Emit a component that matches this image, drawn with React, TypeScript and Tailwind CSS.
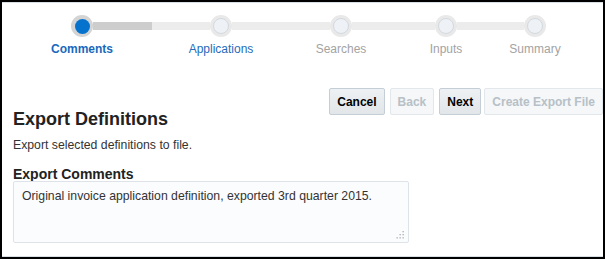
import React from "react";

type Step = { label: string; state: "active" | "todo" | "visited" };

const steps: Step[] = [
  { label: "Comments", state: "active" },
  { label: "Applications", state: "visited" },
  { label: "Searches", state: "todo" },
  { label: "Inputs", state: "todo" },
  { label: "Summary", state: "todo" },
];

function Circle({ active }: { active: boolean }) {
  if (active) {
    return (
      <div className="w-[22px] h-[22px] rounded-full bg-[#d4d4d4] flex items-center justify-center">
        <div className="w-[15px] h-[15px] rounded-full bg-[#0572ce]" />
      </div>
    );
  }
  return (
    <div className="w-[22px] h-[22px] rounded-full bg-[#e9e9e9] flex items-center justify-center">
      <div className="w-[16px] h-[16px] rounded-full bg-[#eef2f6] border border-[#d3d9de]" />
    </div>
  );
}

function StepNode({ step }: { step: Step }) {
  const labelClass =
    step.state === "active"
      ? "font-bold text-[#1769bd]"
      : step.state === "visited"
      ? "text-[#1f6cbb]"
      : "text-[#a3a3a3]";
  return (
    <div className="flex flex-col items-center w-[22px] shrink-0">
      <Circle active={step.state === "active"} />
      <div className={`mt-[5px] text-[12px] leading-[14px] whitespace-nowrap ${labelClass}`}>
        {step.label}
      </div>
    </div>
  );
}

function Btn({ children, disabled }: { children: React.ReactNode; disabled?: boolean }) {
  return (
    <div
      className={
        disabled
          ? "h-[27px] px-[7px] flex items-center border border-[#e2e7eb] bg-[#f5f7f8] text-[#b7c0c7] text-[12px] font-bold rounded-[2px]"
          : "h-[27px] px-[7px] flex items-center border border-[#c5ced6] bg-gradient-to-b from-[#eef1f3] to-[#e2e6e9] text-[#000] text-[12px] font-bold rounded-[2px]"
      }
    >
      {children}
    </div>
  );
}

export default function App() {
  return (
    <div
      className="w-[605px] h-[259px] border-2 border-black bg-white text-[#333]"
      style={{ fontFamily: '"Liberation Sans", Arial, sans-serif' }}
    >
      <div className="h-full border-y border-[#d9e0e5] flex flex-col">
        {/* step train */}
        <div className="pt-[12px] pl-[69px] flex items-start">
          <StepNode step={steps[0]} />
          <div className="mt-[7px] h-[8px] w-[117px] flex shrink-0">
            <div className="w-[59px] h-full bg-[#cdcdcd]" />
            <div className="flex-1 h-full bg-[#ececec]" />
          </div>
          <StepNode step={steps[1]} />
          <div className="mt-[7px] h-[8px] w-[98px] bg-[#ececec] shrink-0" />
          <StepNode step={steps[2]} />
          <div className="mt-[7px] h-[8px] w-[83px] bg-[#ececec] shrink-0" />
          <StepNode step={steps[3]} />
          <div className="mt-[7px] h-[8px] w-[67px] bg-[#ececec] shrink-0" />
          <StepNode step={steps[4]} />
        </div>

        {/* header row */}
        <div className="mt-[32px] pl-[11px] pr-0 flex items-start justify-between">
          <h1 className="mt-[20px] text-[18px] leading-[22px] font-bold text-[#222]">
            Export Definitions
          </h1>
          <div className="flex items-center">
            <Btn>Cancel</Btn>
            <div className="ml-[5px]">
              <Btn disabled>Back</Btn>
            </div>
            <div className="ml-[5px]">
              <Btn>Next</Btn>
            </div>
            <div className="ml-[3px]">
              <Btn disabled>Create Export File</Btn>
            </div>
          </div>
        </div>

        <div className="pl-[11px]">
          <p className="mt-[7px] text-[12.25px] leading-[16px] text-[#333]">
            Export selected definitions to file.
          </p>
          <div className="mt-[14px] text-[14px] leading-[14px] font-bold text-[#222]">
            Export Comments
          </div>
          <div className="relative w-[396px] h-[62px] border border-[#dde3e8] bg-[#fbfcfe] rounded-[2px] pt-[7px] px-[8px] text-[12.25px] leading-[14px] text-[#333]">
            Original invoice application definition, exported 3rd quarter 2015.
            <svg
              className="absolute right-[3px] bottom-[2px]"
              width="10"
              height="10"
              viewBox="0 0 10 10"
            >
              <rect x="7.5" y="1" width="1.3" height="1.3" fill="#a9adb1" />
              <rect x="4.5" y="4" width="1.3" height="1.3" fill="#a9adb1" />
              <rect x="7.5" y="4" width="1.3" height="1.3" fill="#a9adb1" />
              <rect x="1.5" y="7.2" width="1.3" height="1.3" fill="#a9adb1" />
              <rect x="4.5" y="7.2" width="1.3" height="1.3" fill="#a9adb1" />
              <rect x="7.5" y="7.2" width="1.3" height="1.3" fill="#a9adb1" />
            </svg>
          </div>
        </div>
      </div>
    </div>
  );
}
